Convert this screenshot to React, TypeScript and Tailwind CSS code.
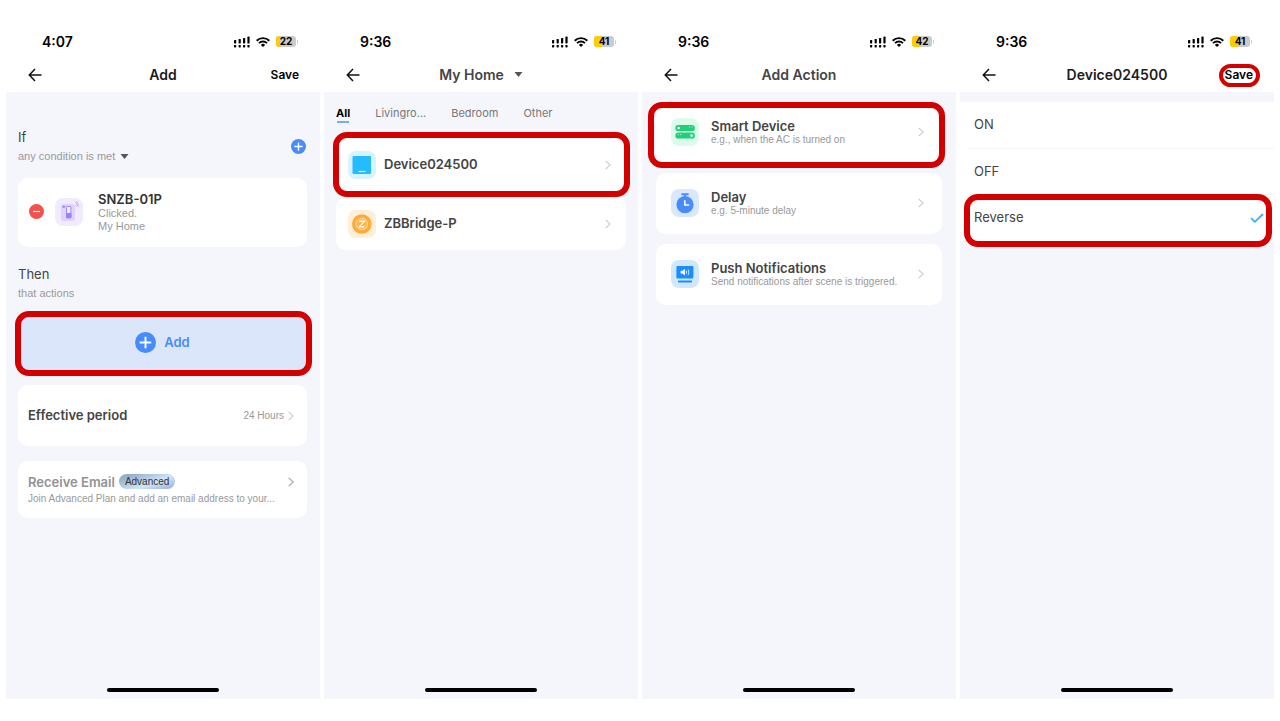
import type { ReactNode } from "react";

type PhoneProps = {
  time: string;
  battery: number;
  title: string;
  picker?: boolean;
  dark?: boolean;
  action?: ReactNode;
  children: ReactNode;
};

const StatusIcons = ({ battery }: { battery: number }) => (
  <div className="flex items-center gap-[6px]">
    <svg className="h-3 w-4" viewBox="0 0 16 12" fill="#000">
      <rect x="0" y="4" width="2.2" height="3.4" rx="0.6" />
      <rect x="4.6" y="3" width="2.2" height="4.4" rx="0.6" />
      <rect x="9" y="2" width="2.2" height="5.4" rx="0.6" />
      <rect x="13.4" y="0.6" width="2.2" height="6.8" rx="0.6" />
      <rect x="0" y="9" width="2.2" height="2.4" rx="0.6" />
      <rect x="4.6" y="9" width="2.2" height="2.4" rx="0.6" />
      <rect x="9" y="9" width="2.2" height="2.4" rx="0.6" />
      <rect x="13.4" y="9" width="2.2" height="2.4" rx="0.6" />
    </svg>
    <svg className="h-[10px] w-[14px]" viewBox="0 0 14 10" fill="none" stroke="#000" strokeWidth="1.9">
      <path d="M0.7 3.7a9 9 0 0 1 12.6 0" />
      <path d="M3 6.1a5.7 5.7 0 0 1 8 0" />
      <path d="M7 10 4.9 7.9a3 3 0 0 1 4.2 0z" fill="#000" stroke="none" />
    </svg>
    <div className="flex items-center">
      <div className="relative h-[11px] w-5 overflow-hidden rounded-[3px] bg-[#cbcbcb]">
        <div className="h-full bg-[#ffcc00]" style={{ width: `${battery}%` }} />
        <span className="absolute inset-0 text-center text-[10px] leading-[11px] font-bold text-black">{battery}</span>
      </div>
      <span className="ml-px h-1 w-px rounded-r bg-[#cbcbcb]" />
    </div>
  </div>
);

const Caret = () => (
  <svg className="h-[5px] w-[9px]" viewBox="0 0 9 5" fill="#555">
    <path d="M0.5 0h8L4.5 5z" />
  </svg>
);

const Chevron = ({ dark }: { dark?: boolean }) => (
  <svg
    className="h-[10px] w-[6px] shrink-0"
    viewBox="0 0 6 10"
    fill="none"
    stroke={dark ? "#b4b4b4" : "#cecece"}
    strokeWidth={dark ? 1.4 : 1.1}
  >
    <path d="M0.7 1 5.2 5 0.7 9" />
  </svg>
);

// red frame drawn round the control the reader should tap
const Highlight = ({ className }: { className: string }) => (
  <span className={`pointer-events-none absolute z-10 border-[#d30000] ${className}`} />
);

const Phone = ({ time, battery, title, picker, dark, action, children }: PhoneProps) => (
  <section className="flex min-w-0 flex-col">
    <div className="flex h-[25px] items-center justify-between pr-[22px] pl-9">
      <span className="text-sm font-semibold text-black">{time}</span>
      <StatusIcons battery={battery} />
    </div>
    <header className="grid h-[38px] grid-cols-[60px_1fr_60px] items-center pt-[3px]">
      <button aria-label="Back" className="ml-[22px] w-4">
        <svg className="h-[14px] w-[14px]" viewBox="0 0 14 14" fill="none" stroke="#111" strokeWidth="1.5">
          <path d="M13.5 7H1.5M7 1 1.3 7 7 13" />
        </svg>
      </button>
      <h1
        className={`flex items-center justify-center gap-[10px] text-sm font-semibold ${dark ? "text-[#1c1c1c]" : "text-[#454545]"}`}
      >
        {title}
        {picker && <Caret />}
      </h1>
      {action}
    </header>
    <main className="flex flex-1 flex-col bg-[#f5f6fb]">
      {children}
      <div className="mx-auto mt-auto mb-[7px] h-1 w-28 rounded-full bg-black" />
    </main>
  </section>
);

const SaveButton = ({ marked }: { marked?: boolean }) => (
  <button className="relative justify-self-end pr-[21px] text-xs font-semibold text-black">
    Save
    {marked && <Highlight className="-top-[3px] right-[14px] -left-[6px] h-[23px] rounded-xl border-4" />}
  </button>
);

const PlusCircle = ({ className }: { className: string }) => (
  <svg className={className} viewBox="0 0 20 20">
    <circle cx="10" cy="10" r="10" fill="#478cff" />
    <path d="M10 4.5v11M4.5 10h11" stroke="#fff" strokeWidth="1.8" />
  </svg>
);

const ButtonIcon = () => (
  <svg className="h-7 w-7 shrink-0" viewBox="0 0 28 28">
    <rect width="28" height="28" rx="8" fill="#f0ebfe" />
    <rect x="6" y="6" width="14" height="17" rx="3" fill="#ddd3fc" />
    <rect x="11.5" y="8.5" width="4.4" height="11.2" rx="0.8" fill="#f0ebfe" stroke="#a18bf5" />
    <rect x="11" y="15" width="5.4" height="5.2" rx="0.8" fill="#9b82f7" />
    <path d="M7.2 8.7h3.2M8.8 7.4V10" stroke="#a18bf5" strokeWidth="1.2" />
    <path d="M20.5 4.2l3 4.4M21.8 3.2l1.7 4.6M20.5 7.2l1.6 1.6" stroke="#c3b5fa" strokeWidth="1" />
  </svg>
);

const DeviceIcon = () => (
  <svg className="h-7 w-7 shrink-0" viewBox="0 0 28 28">
    <rect width="28" height="28" rx="8" fill="#d5f4ff" />
    <rect x="4.5" y="5" width="18.5" height="18" rx="1" fill="#25bbff" />
    <path d="M10.5 20.5h7" stroke="#fff" strokeWidth="1.2" />
  </svg>
);

const BridgeIcon = () => (
  <svg className="h-7 w-7 shrink-0" viewBox="0 0 28 28">
    <rect width="28" height="28" rx="8" fill="#ffefd8" />
    <circle cx="13.8" cy="14" r="9.8" fill="#ffab35" />
    <circle cx="13.8" cy="14" r="5.8" fill="#ffb650" stroke="#ffe6c4" strokeWidth="0.9" />
    <path d="M11.2 11.2h5.4l-5.4 5.6h5.4" fill="none" stroke="#fff" strokeWidth="1.2" strokeLinejoin="round" />
  </svg>
);

const SwitchesIcon = () => (
  <svg className="h-7 w-7 shrink-0" viewBox="0 0 28 28">
    <rect width="28" height="28" rx="8" fill="#dcfbea" />
    <rect x="4.4" y="7" width="19.4" height="6" rx="2.6" fill="#20cf76" />
    <rect x="4.4" y="14.6" width="19.4" height="6" rx="2.6" fill="#20cf76" />
    <circle cx="7.6" cy="10" r="1.3" fill="#fff" />
    <circle cx="20.6" cy="17.6" r="1.3" fill="#fff" />
    <path d="M18 9h1.2M20.6 9h1.2M6.5 16.6h1.2M9 16.6h1.2" stroke="#c9f7de" strokeWidth="0.8" />
  </svg>
);

const TimerIcon = () => (
  <svg className="h-7 w-7 shrink-0" viewBox="0 0 28 28">
    <rect width="28" height="28" rx="8" fill="#d9e7ff" />
    <path d="M10.4 5.2h7.2M14 5v3" stroke="#478cff" strokeWidth="2" />
    <circle cx="14" cy="15.6" r="8.6" fill="#478cff" />
    <path d="M13.8 11.2v4.8h4.4" fill="none" stroke="#fff" strokeWidth="1.6" />
  </svg>
);

const PushIcon = () => (
  <svg className="h-7 w-7 shrink-0" viewBox="0 0 28 28">
    <rect width="28" height="28" rx="8" fill="#d0e8ff" />
    <rect x="5.4" y="6" width="17" height="12.4" rx="1" fill="#1a8eff" />
    <rect x="7" y="20.4" width="14" height="2" rx="0.6" fill="#1a8eff" />
    <path d="M9.6 10.8h1.8l2.6-2v6.8l-2.6-2H9.6z" fill="#fff" />
    <path d="M15.4 10.6v3.2M17.2 9.6q1.4 2.6 0 5.2" fill="none" stroke="#fff" strokeWidth="0.8" />
  </svg>
);

const devices = [
  { name: "Device024500", icon: <DeviceIcon />, marked: true },
  { name: "ZBBridge-P", icon: <BridgeIcon />, marked: false },
];

const actions = [
  { name: "Smart Device", hint: "e.g., when the AC is turned on", icon: <SwitchesIcon />, marked: true },
  { name: "Delay", hint: "e.g. 5-minute delay", icon: <TimerIcon />, marked: false },
  { name: "Push Notifications", hint: "Send notifications after scene is triggered.", icon: <PushIcon />, marked: false },
];

const rooms = ["Livingro...", "Bedroom", "Other"];

const SceneScreen = () => (
  <Phone time="4:07" battery={22} title="Add" dark action={<SaveButton />}>
    <div className="pt-9 pr-[13px] pl-3">
      <div className="flex items-center justify-between pr-px">
        <div>
          <h2 className="text-[13px] leading-[18px] text-[#444]">If</h2>
          <button className="flex items-center gap-[5px] font-['Liberation_Sans',sans-serif] text-[11px] leading-5 text-[#999]">
            any condition is met
            <Caret />
          </button>
        </div>
        <button aria-label="Add condition" className="pb-[2px]">
          <PlusCircle className="h-[15px] w-[15px]" />
        </button>
      </div>

      <div className="mt-3 flex h-[69px] items-center rounded-[10px] bg-white pb-[2px] pl-[11px]">
        <button aria-label="Remove condition">
          <svg className="h-[15px] w-[15px]" viewBox="0 0 15 15">
            <circle cx="7.5" cy="7.5" r="7.5" fill="#f4504c" />
            <path d="M4 7.5h7" stroke="#fff" strokeWidth="1.2" />
          </svg>
        </button>
        <div className="ml-[11px]">
          <ButtonIcon />
        </div>
        <div className="ml-[15px] font-['Liberation_Sans',sans-serif] text-[11px] leading-[13px] text-[#999]">
          <h3 className="font-['Inter',sans-serif] text-[13px] leading-4 font-semibold text-[#333]">SNZB-01P</h3>
          <p>Clicked.</p>
          <p>My Home</p>
        </div>
      </div>

      <h2 className="mt-[18px] text-[13px] leading-[18px] text-[#444]">Then</h2>
      <p className="font-['Liberation_Sans',sans-serif] text-[11px] leading-5 text-[#999]">that actions</p>

      <button className="relative mt-3 flex h-[57px] w-full items-center justify-center gap-2 rounded-[10px] bg-[#dbe6fb] pb-[2px] text-[13px] font-semibold text-[#478cff]">
        <PlusCircle className="h-[21px] w-[21px]" />
        Add
        <Highlight className="-top-[4px] -right-[5px] -bottom-[4px] -left-[3px] rounded-[14px] border-6" />
      </button>

      <button className="mt-[13px] flex h-[61px] w-full items-center justify-between rounded-[10px] bg-white pr-[13px] pl-[10px]">
        <span className="text-[13px] font-semibold text-[#444]">Effective period</span>
        <span className="flex items-center gap-1 font-['Liberation_Sans',sans-serif] text-[10px] text-[#999]">
          24 Hours
          <Chevron />
        </span>
      </button>

      <button className="mt-[15px] block h-[57px] w-full rounded-[10px] bg-white pr-[13px] pl-[10px] text-left">
        <span className="flex items-center">
          <span className="text-[13px] leading-[18px] font-semibold text-[#929292]">Receive Email</span>
          <span className="ml-1 rounded-full bg-linear-160 from-[#98aecb] from-15% via-[#cfe5fa] via-60% to-[#98b0cf] px-[6px] font-['Liberation_Sans',sans-serif] text-[10px] leading-[15px] text-[#333]">
            Advanced
          </span>
          <span className="ml-auto">
            <Chevron dark />
          </span>
        </span>
        <span className="block font-['Liberation_Sans',sans-serif] text-[10px] leading-4 text-[#999]">
          Join Advanced Plan and add an email address to your...
        </span>
      </button>
    </div>
  </Phone>
);

const DeviceScreen = () => (
  <Phone time="9:36" battery={41} title="My Home" picker>
    <nav className="flex h-[46px] gap-[25px] pt-[13px] pl-3 text-[11px] leading-4 text-[#777]">
      <button className="h-4 font-bold text-black">
        All
        <span className="mx-auto block h-[2px] w-3 bg-[#77a9ff]" />
      </button>
      {rooms.map((room) => (
        <button key={room} className="h-4">
          {room}
        </button>
      ))}
    </nav>
    <div className="flex flex-col gap-[6px] px-3">
      {devices.map((device) => (
        <button key={device.name} className="relative flex h-[53px] items-center rounded-[10px] bg-white pr-[15px] pl-3">
          {device.icon}
          <span className="ml-2 text-[13px] font-semibold text-[#444]">{device.name}</span>
          <span className="ml-auto">
            <Chevron />
          </span>
          {device.marked && <Highlight className="-inset-y-[6px] -right-[4px] -left-[3px] rounded-[14px] border-6" />}
        </button>
      ))}
    </div>
  </Phone>
);

const ActionScreen = () => (
  <Phone time="9:36" battery={42} title="Add Action">
    <div className="flex flex-col gap-[10px] px-[14px] pt-[10px]">
      {actions.map((item) => (
        <button key={item.name} className="relative flex h-[61px] items-center rounded-[10px] bg-white pr-[18px] pb-px pl-[15px] text-left">
          {item.icon}
          <span className="ml-3">
            <span className="block text-[13px] leading-4 font-semibold text-[#444]">{item.name}</span>
            <span className="block font-['Liberation_Sans',sans-serif] text-[10px] leading-3 whitespace-nowrap text-[#999]">
              {item.hint}
            </span>
          </span>
          <span className="ml-auto">
            <Chevron />
          </span>
          {item.marked && <Highlight className="top-0 -right-[3px] -bottom-[5px] -left-[8px] rounded-[14px] border-6" />}
        </button>
      ))}
    </div>
  </Phone>
);

const StateScreen = () => (
  <Phone time="9:36" battery={41} title="Device024500" dark action={<SaveButton marked />}>
    <div className="mt-[10px] flex flex-col bg-white pl-2 text-[13px] text-[#444]">
      <button className="h-[47px] border-b border-[#f3f3f3] pl-[6px] text-left">ON</button>
      <button className="h-[46px] border-b border-[#f3f3f3] pl-[6px] text-left">OFF</button>
      <button className="relative flex h-[46px] items-center justify-between pr-[10px] pl-[6px]">
        Reverse
        <svg className="h-[10px] w-[14px]" viewBox="0 0 14 10" fill="none" stroke="#3aaeff" strokeWidth="1.8">
          <path d="M1 5.2 4.8 8.8 13 1" />
        </svg>
        <Highlight className="-top-[1px] right-[2px] -bottom-[6px] -left-[4px] rounded-[14px] border-6" />
      </button>
    </div>
  </Phone>
);

const App = () => (
  <div className="grid min-h-screen grid-cols-4 gap-1 bg-white px-[6px] pt-[29px] pb-[22px] font-['Inter',sans-serif]">
    <SceneScreen />
    <DeviceScreen />
    <ActionScreen />
    <StateScreen />
  </div>
);

export default App;
